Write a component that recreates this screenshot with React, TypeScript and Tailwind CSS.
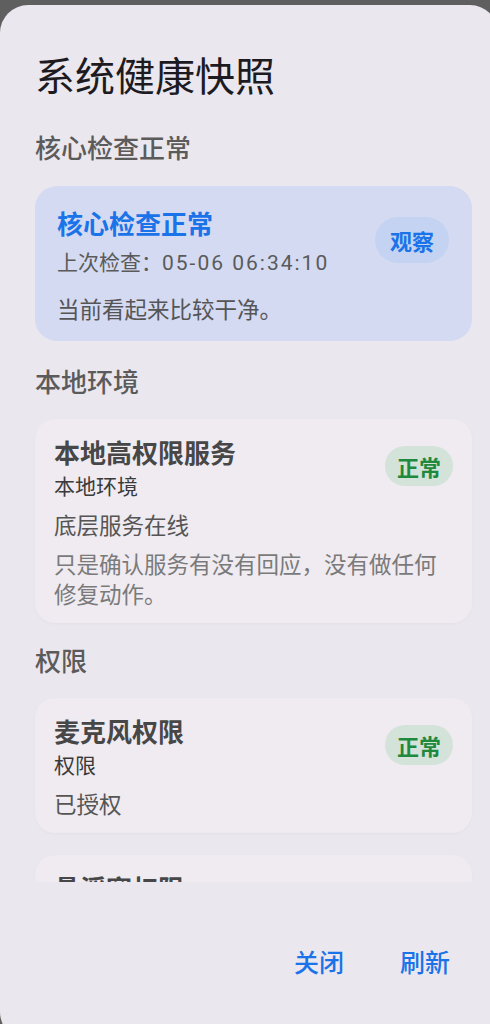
const font = { fontFamily: '"Noto Sans CJK SC", "Noto Sans", sans-serif' };
const digits = { fontFamily: 'Roboto, "Noto Sans CJK SC", sans-serif' };

type Item = {
  title: string;
  group: string;
  status: string;
  note?: string;
};

function StatusPill({ label }: { label: string }) {
  return (
    <span className="mt-[10px] flex h-[40px] shrink-0 items-center rounded-full bg-[#d4e3d9] px-[12px] text-[22px] font-bold leading-none text-[#1f8a3d]">
      {label}
    </span>
  );
}

function CheckCard({ item }: { item: Item }) {
  return (
    <div className="mt-[22px] rounded-[20px] bg-[#efebf1] pb-[15px] pl-[19px] pr-[19px] pt-[17px] shadow-[0_1px_3px_rgba(0,0,0,0.03)]">
      <div className="flex items-start justify-between">
        <div className="flex flex-col">
          <div className="text-[26px] font-bold leading-[32px] text-[#474747]">{item.title}</div>
          <div className="mt-[3px] text-[21px] leading-[28px] text-[#3a3a3a]">{item.group}</div>
        </div>
        <StatusPill label="正常" />
      </div>
      <div className="mt-[10px] text-[22.5px] leading-[30px] text-[#555]">{item.status}</div>
      {item.note && (
        <div className="mt-[9px] text-[22.5px] leading-[30px] text-[#7a7a7a]">{item.note}</div>
      )}
    </div>
  );
}

function SectionTitle({ children, className = '' }: { children: React.ReactNode; className?: string }) {
  return (
    <div className={`text-[26px] font-medium leading-[32px] text-[#5b5b5b] ${className}`}>{children}</div>
  );
}

export default function App() {
  return (
    <div className="h-[1024px] w-[490px] overflow-hidden bg-[#5f5f5f] pt-[5px]" style={font}>
      <div className="flex h-[1035px] w-[498px] flex-col rounded-[28px] bg-[#ebe7ee]">
        <h1 className="pl-[35px] pt-[45px] text-[40px] font-normal leading-[48px] text-[#1d1b1f]">
          系统健康快照
        </h1>

        <div className="h-[784px] overflow-hidden pl-[35px] pr-[26px]">
          <SectionTitle className="mt-[33px]">核心检查正常</SectionTitle>

          <div className="mt-[23px] rounded-[22px] bg-[#d4daf1] pb-[18px] pl-[22px] pr-[23px] pt-[21px]">
            <div className="flex items-start justify-between">
              <div className="flex flex-col">
                <div className="text-[26px] font-bold leading-[32px] text-[#1a73e8]">核心检查正常</div>
                <div className="mt-[8px] text-[21px] leading-[28px] text-[#5a5a5a]">
                  上次检查：
                  <span className="tracking-[2px]" style={digits}>
                    05-06 06:34:10
                  </span>
                </div>
              </div>
              <span className="mt-[10px] flex h-[46px] shrink-0 items-center rounded-full bg-[#c4d3f2] px-[15px] text-[22px] font-bold leading-none text-[#1a73e8]">
                观察
              </span>
            </div>
            <div className="mt-[16px] text-[22.5px] leading-[30px] text-[#555]">当前看起来比较干净。</div>
          </div>

          <SectionTitle className="mt-[24px]">本地环境</SectionTitle>
          <CheckCard
            item={{
              title: '本地高权限服务',
              group: '本地环境',
              status: '底层服务在线',
              note: '只是确认服务有没有回应，没有做任何修复动作。',
            }}
          />

          <SectionTitle className="mt-[21px]">权限</SectionTitle>
          <CheckCard item={{ title: '麦克风权限', group: '权限', status: '已授权' }} />
          <CheckCard item={{ title: '悬浮窗权限', group: '权限', status: '已授权' }} />
        </div>

        <div className="flex justify-end gap-[56px] pr-[48px] pt-[63px]">
          <button className="text-[25px] font-medium leading-[32px] text-[#1a73e8]">关闭</button>
          <button className="text-[25px] font-medium leading-[32px] text-[#1a73e8]">刷新</button>
        </div>
      </div>
    </div>
  );
}
